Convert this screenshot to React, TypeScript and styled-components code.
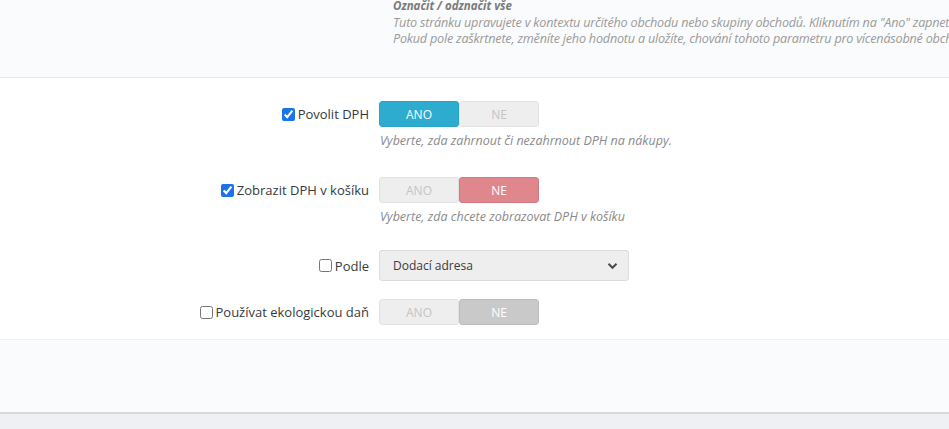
import React from "react";
import styled, { createGlobalStyle } from "styled-components";

const Global = createGlobalStyle`
  html, body { margin: 0; padding: 0; background: #eff0f3; }
  body { font-family: "Open Sans", "Noto Sans", sans-serif; color: #363a41; }
`;

const Page = styled.div`
  width: 949px;
  height: 429px;
  overflow: hidden;
  display: flex;
  flex-direction: column;
  background: #eff0f3;
`;

const TopPanel = styled.div`
  background: #fafbfc;
  border-bottom: 1px solid #e5e7ea;
  height: 77px;
  padding-left: 393px;
  box-sizing: content-box;
  overflow: hidden;
`;

const TopTitle = styled.div`
  font-size: 11.5px;
  font-style: italic;
  font-weight: 700;
  color: #7a7a7a;
  line-height: 18px;
  margin-top: -3px;
  white-space: nowrap;
`;

const TopLine = styled.div`
  font-size: 12.6px;
  font-style: italic;
  color: #9a9a9a;
  line-height: 16px;
  white-space: nowrap;
  letter-spacing: -0.2px;
`;

const Form = styled.div`
  background: #fff;
  padding-top: 23px;
  height: 262px;
  box-sizing: border-box;
  border-bottom: 1px solid #eef0f2;
`;

const Row = styled.div<{ $mb: number }>`
  display: grid;
  grid-template-columns: 369px 1fr;
  column-gap: 10px;
  margin-bottom: ${(p) => p.$mb}px;
`;

const Label = styled.label<{ $h: number }>`
  display: flex;
  justify-content: flex-end;
  align-items: center;
  height: ${(p) => p.$h}px;
  font-size: 13px;
  color: #363a41;
  white-space: nowrap;
`;

const Check = styled.input`
  width: 13px;
  height: 13px;
  margin: 0 3px 0 0;
  accent-color: #1a73e8;
`;

const Switch = styled.div`
  display: flex;
  width: 160px;
  height: 26px;
  border-radius: 3px;
  overflow: hidden;
`;

type Tone = "on" | "off" | "no" | "grey";

const SwitchSide = styled.div<{ $tone: Tone }>`
  flex: 1;
  display: flex;
  align-items: center;
  justify-content: center;
  font-size: 12px;
  box-sizing: border-box;
  background: ${(p) =>
    p.$tone === "on" ? "#2eaccf" : p.$tone === "no" ? "#e0878d" : p.$tone === "grey" ? "#c9c9c9" : "#eeeeee"};
  color: ${(p) => (p.$tone === "off" ? "#c4c4c4" : "#fff")};
  border: 1px solid
    ${(p) =>
      p.$tone === "on" ? "#2aa3c4" : p.$tone === "no" ? "#cd7a80" : p.$tone === "grey" ? "#bcbcbc" : "#e2e2e2"};
  border-radius: 3px;
`;

const Help = styled.div`
  font-size: 12.5px;
  font-style: italic;
  color: #8a8a8a;
  margin-top: 5px;
  line-height: 18px;
  padding-left: 1px;
`;

const Select = styled.div`
  width: 250px;
  height: 31px;
  box-sizing: border-box;
  background: #eeeeee;
  border: 1px solid #dcdcdc;
  border-radius: 3px;
  display: flex;
  align-items: center;
  justify-content: space-between;
  padding: 0 10px 0 13px;
  font-size: 12px;
  color: #363a41;
`;

const Footer = styled.div`
  background: #fafbfd;
  height: 72px;
  border-bottom: 2px solid #d8d9dc;
`;

function Toggle({ yes }: { yes: "on" | "no" | "grey" }) {
  const yesActive = yes === "on";
  return (
    <Switch>
      <SwitchSide $tone={yesActive ? "on" : "off"}>ANO</SwitchSide>
      <SwitchSide $tone={yesActive ? "off" : yes}>NE</SwitchSide>
    </Switch>
  );
}

export default function App() {
  return (
    <Page>
      <Global />
      <TopPanel>
        <TopTitle>Označit / odznačit vše</TopTitle>
        <TopLine>
          Tuto stránku upravujete v kontextu určitého obchodu nebo skupiny obchodů. Kliknutím na "Ano" zapnete
        </TopLine>
        <TopLine>
          Pokud pole zaškrtnete, změníte jeho hodnotu a uložíte, chování tohoto parametru pro vícenásobné obchody
        </TopLine>
      </TopPanel>
      <Form>
        <Row $mb={27}>
          <Label $h={26}>
            <Check type="checkbox" defaultChecked />
            Povolit DPH
          </Label>
          <div>
            <Toggle yes="on" />
            <Help>Vyberte, zda zahrnout či nezahrnout DPH na nákupy.</Help>
          </div>
        </Row>
        <Row $mb={24}>
          <Label $h={26}>
            <Check type="checkbox" defaultChecked />
            Zobrazit DPH v košíku
          </Label>
          <div>
            <Toggle yes="no" />
            <Help>Vyberte, zda chcete zobrazovat DPH v košíku</Help>
          </div>
        </Row>
        <Row $mb={18}>
          <Label $h={31}>
            <Check type="checkbox" />
            Podle
          </Label>
          <div>
            <Select>
              <span>Dodací adresa</span>
              <svg width="11" height="8" viewBox="0 0 11 8">
                <path d="M1.5 1.8 L5.5 5.8 L9.5 1.8" fill="none" stroke="#4a4a4a" strokeWidth="2" />
              </svg>
            </Select>
          </div>
        </Row>
        <Row $mb={0}>
          <Label $h={26}>
            <Check type="checkbox" />
            Používat ekologickou daň
          </Label>
          <div>
            <Toggle yes="grey" />
          </div>
        </Row>
      </Form>
      <Footer />
    </Page>
  );
}
